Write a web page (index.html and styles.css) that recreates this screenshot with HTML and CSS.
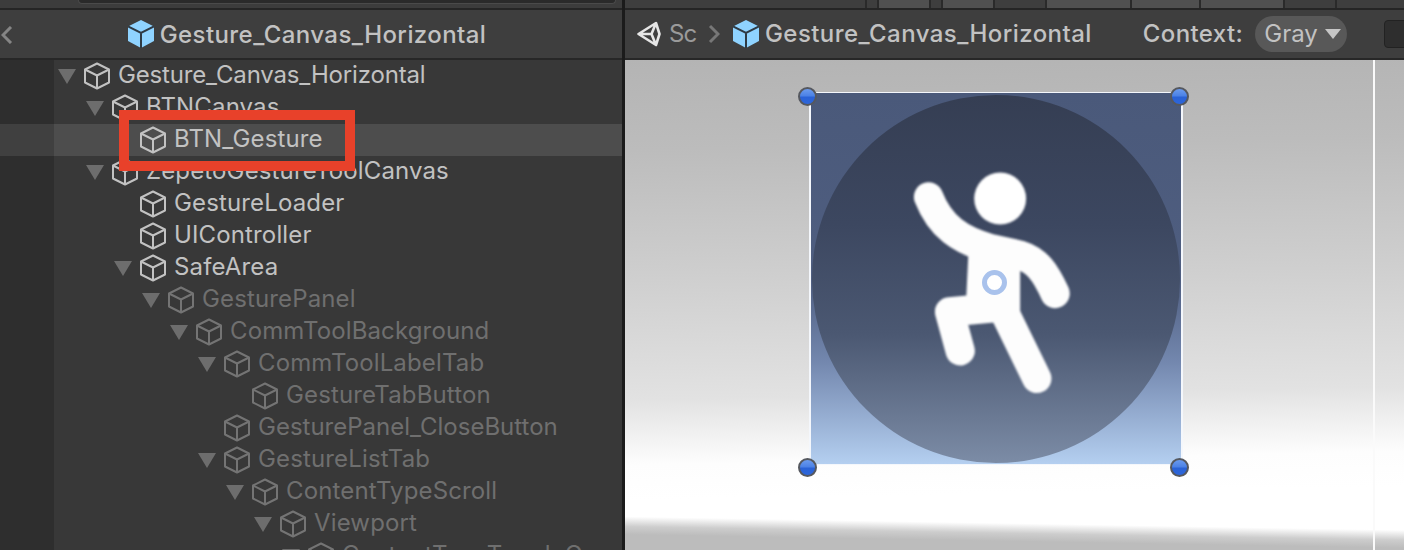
FILE: index.html
```html
<!DOCTYPE html>
<html lang="en">
<head>
    <meta charset="UTF-8">
    <title>Gesture_Canvas_Horizontal</title>
    <link rel="stylesheet" href="styles.css">
</head>
<body>
    <svg class="defs" width="0" height="0">
        <symbol id="cube" viewBox="0 0 26 28">
            <path d="M13 1.5 L25 7.5 V20.5 L13 26.5 L1 20.5 V7.5 Z M1 7.5 L13 13.5 L25 7.5 M13 13.5 V26.5" fill="none" stroke="currentColor" stroke-width="2" stroke-linejoin="round"/>
        </symbol>
        <symbol id="cube-blue" viewBox="0 0 26 28">
            <path d="M13 0 L26 6.5 V21 L13 28 L0 21 V6.5 Z" fill="#8fd3ff"/>
            <path d="M0 6.5 L13 13 L26 6.5 M13 13 V28" fill="none" stroke="#2e3a44" stroke-width="2"/>
        </symbol>
    </svg>

    <div class="window">
        <section class="hierarchy">
            <div class="strip strip-left"><div class="search"></div></div>
            <header class="head head-left">
                <svg class="back" viewBox="0 0 12 18"><path d="M10 1 L2 9 L10 17" fill="none" stroke="currentColor" stroke-width="3"/></svg>
                <svg class="cube"><use href="#cube-blue"/></svg>
                <span class="title">Gesture_Canvas_Horizontal</span>
            </header>
            <div class="tree">
                <div class="row depth-0 tight"><i class="arrow"></i><svg class="cube"><use href="#cube"/></svg><span>Gesture_Canvas_Horizontal</span></div>
                <div class="row depth-1"><i class="arrow"></i><svg class="cube"><use href="#cube"/></svg><span>BTNCanvas</span></div>
                <div class="row depth-2 selected"><i class="leaf"></i><svg class="cube"><use href="#cube"/></svg><span>BTN_Gesture</span></div>
                <div class="row depth-1"><i class="arrow"></i><svg class="cube"><use href="#cube"/></svg><span>ZepetoGestureToolCanvas</span></div>
                <div class="row depth-2"><i class="leaf"></i><svg class="cube"><use href="#cube"/></svg><span>GestureLoader</span></div>
                <div class="row depth-2"><i class="leaf"></i><svg class="cube"><use href="#cube"/></svg><span>UIController</span></div>
                <div class="row depth-2"><i class="arrow"></i><svg class="cube"><use href="#cube"/></svg><span>SafeArea</span></div>
                <div class="row depth-3 dim"><i class="arrow"></i><svg class="cube"><use href="#cube"/></svg><span>GesturePanel</span></div>
                <div class="row depth-4 dim"><i class="arrow"></i><svg class="cube"><use href="#cube"/></svg><span>CommToolBackground</span></div>
                <div class="row depth-5 dim"><i class="arrow"></i><svg class="cube"><use href="#cube"/></svg><span>CommToolLabelTab</span></div>
                <div class="row depth-6 dim"><i class="leaf"></i><svg class="cube"><use href="#cube"/></svg><span>GestureTabButton</span></div>
                <div class="row depth-5 dim tight-2"><i class="leaf"></i><svg class="cube"><use href="#cube"/></svg><span>GesturePanel_CloseButton</span></div>
                <div class="row depth-5 dim"><i class="arrow"></i><svg class="cube"><use href="#cube"/></svg><span>GestureListTab</span></div>
                <div class="row depth-6 dim"><i class="arrow"></i><svg class="cube"><use href="#cube"/></svg><span>ContentTypeScroll</span></div>
                <div class="row depth-7 dim"><i class="arrow"></i><svg class="cube"><use href="#cube"/></svg><span>Viewport</span></div>
                <div class="row depth-8 dim"><i class="arrow"></i><svg class="cube"><use href="#cube"/></svg><span>ContentTypeToggleGroup</span></div>
            </div>
            <div class="callout"></div>
        </section>

        <section class="scene">
            <div class="strip strip-right">
                <i class="tab w-240"></i><i class="tab w-10"></i><i class="tab light w-50"></i><i class="tab w-10"></i><i class="tab light w-50"></i>
                <i class="tab w-50"></i><i class="tab light w-83"></i><i class="tab light w-67"></i><i class="tab light w-82"></i><i class="tab w-50"></i><i class="tab w-fill"></i>
            </div>
            <header class="head head-right">
                <svg class="unity" viewBox="0 0 24 26">
                    <path d="M1.5 13 L19 2 L22.5 13 L19 24 Z M1.5 13 H14.5 M19 2 L14.5 13 L19 24" fill="none" stroke="#e6e6e6" stroke-width="2.6" stroke-linejoin="round"/>
                </svg>
                <span class="crumb">Sc</span>
                <svg class="sep" viewBox="0 0 12 20"><path d="M2 2 L10 10 L2 18" fill="none" stroke="currentColor" stroke-width="3"/></svg>
                <svg class="cube"><use href="#cube-blue"/></svg>
                <span class="title">Gesture_Canvas_Horizontal</span>
                <span class="context">Context:</span>
                <div class="pill">Gray<i class="pill-arrow"></i></div>
                <div class="dark-btn"></div>
            </header>
            <div class="preview">
                <i class="guide"></i>
                <div class="rect">
                    <div class="disc"></div>
                    <svg class="figure" viewBox="60 38 1115 1117">
                        <circle cx="630" cy="355" r="78" fill="#fff"/>
                        <g fill="none" stroke="#fdfdfd" stroke-width="88" stroke-linecap="round" stroke-linejoin="round">
                            <path d="M415 350 C450 440 510 480 600 505 L690 525 C740 540 765 575 795 640"/>
                            <path d="M640 690 L740 895"/>
                            <path d="M640 680 L478 695 L510 812"/>
                        </g>
                        <path d="M535 510 H690 V720 H525 Z" fill="#fdfdfd"/>
                    </svg>
                    <i class="pivot"></i>
                </div>
                <i class="handle h-tl"></i><i class="handle h-tr"></i><i class="handle h-bl"></i><i class="handle h-br"></i>
            </div>
        </section>
    </div>
</body>
</html>
```

FILE: styles.css
```css
html, body {
    margin: 0;
    height: 100%;
    overflow: hidden;
}
body {
    font-family: Inter, 'Liberation Sans', sans-serif;
    font-size: 24px;
    background: #1b1b1b;
    color: #c2c2c2;
}
.defs {
    position: absolute;
}
.window {
    display: grid;
    grid-template-columns: 622px 1fr;
    column-gap: 3px;
    height: 550px;
}
.hierarchy, .scene {
    position: relative;
    display: flex;
    flex-direction: column;
    overflow: hidden;
    min-width: 0;
}

/* top strip, only the last pixels of the toolbar above are visible */
.strip {
    height: 8px;
    flex: none;
    display: flex;
    border-bottom: 2px solid #252525;
    background: #3c3c3c;
}
.search {
    width: 536px;
    height: 3px;
    margin-left: 78px;
    background: #2a2a2a;
    border: 1px solid #4a4a4a;
    border-top: none;
    border-radius: 0 0 6px 6px;
}
.strip-right {
    gap: 2px;
    background: #2a2a2a;
}
.tab {
    flex: none;
    background: #3e3e3e;
}
.tab.light {
    background: #505050;
}
.w-10 { width: 10px; }
.w-50 { width: 50px; }
.w-67 { width: 67px; }
.w-82 { width: 82px; }
.w-83 { width: 83px; }
.w-240 { width: 240px; }
.w-fill { flex: 1; }

.head {
    height: 48px;
    flex: none;
    display: flex;
    align-items: center;
    background: #3e3e3e;
    border-bottom: 2px solid #272727;
}
.head > * {
    flex: none;
}
.head .cube {
    width: 26px;
    height: 28px;
}
.title {
    font-weight: 500;
    letter-spacing: 0.43px;
    white-space: nowrap;
}
.head-left {
    position: relative;
    justify-content: center;
    gap: 6px;
    padding-right: 8px;
}
.head-left .title {
    margin-top: 1px;
}
.back {
    position: absolute;
    left: 1px;
    top: 16px;
    width: 12px;
    height: 18px;
    color: #858585;
}
.head-right {
    padding-left: 12px;
}
.head-right span, .pill {
    margin-bottom: 1px;
}
.unity {
    width: 24px;
    height: 26px;
}
.crumb {
    margin-left: 8px;
    width: 26px;
    letter-spacing: -1px;
    color: #9a9a9a;
}
.sep {
    width: 12px;
    height: 20px;
    margin: 0 13px;
    color: #777;
}
.head-right .title {
    margin-left: 6px;
}
.context {
    margin-left: 51px;
    font-weight: 500;
    letter-spacing: 0.4px;
}
.pill {
    display: flex;
    align-items: center;
    width: 92px;
    height: 36px;
    margin-left: 12px;
    padding-left: 9px;
    box-sizing: border-box;
    border-radius: 18px;
    background: #585858;
}
.pill-arrow {
    width: 0;
    height: 0;
    margin-left: 7px;
    border-left: 8px solid transparent;
    border-right: 8px solid transparent;
    border-top: 10px solid #c6c6c6;
}
.dark-btn {
    width: 40px;
    height: 26px;
    margin-left: 37px;
    border: 1px solid #222;
    border-radius: 4px;
    background: #2e2e2e;
}

/* hierarchy tree */
.tree {
    flex: 1;
    overflow: hidden;
    background: linear-gradient(90deg, #2e2e2e 54px, #383838 54px);
}
.row {
    display: flex;
    align-items: center;
    height: 32px;
    letter-spacing: 0.14px;
    white-space: nowrap;
}
.row span {
    margin-left: 8px;
    margin-top: -4px;
}
.row .cube {
    width: 26px;
    height: 28px;
    flex: none;
    margin-left: 8px;
    color: #c2c2c2;
}
.row.tight {
    letter-spacing: -0.16px;
}
.row.tight-2 {
    letter-spacing: 0;
}
.row.dim {
    color: #6f6f6f;
}
.row.dim .cube {
    color: #747474;
}
.row.selected {
    background: linear-gradient(90deg, #404040 54px, #4d4d4d 54px);
}
.arrow, .leaf {
    width: 18px;
    flex: none;
}
.arrow {
    height: 0;
    border-left: 9px solid transparent;
    border-right: 9px solid transparent;
    border-top: 15px solid #6d6d6d;
    box-sizing: border-box;
}
.depth-0 { padding-left: 58px; }
.depth-1 { padding-left: 86px; }
.depth-2 { padding-left: 114px; }
.depth-3 { padding-left: 142px; }
.depth-4 { padding-left: 170px; }
.depth-5 { padding-left: 198px; }
.depth-6 { padding-left: 226px; }
.depth-7 { padding-left: 254px; }
.depth-8 { padding-left: 282px; }

.callout {
    position: absolute;
    left: 119px;
    top: 110px;
    width: 236px;
    height: 61px;
    box-sizing: border-box;
    border: 10px solid #e8412a;
}

/* scene preview */
.preview {
    position: relative;
    flex: 1;
    overflow: hidden;
    background:
        linear-gradient(181deg, transparent 470px, #cdcdcd 480px, #bcbcbc 488px),
        linear-gradient(179deg, #b4b4b4 0, #bcbcbc 90px, #cfcfcf 220px, #e2e2e2 340px, #fdfdfd 405px, #fff 440px);
}
.guide {
    position: absolute;
    left: 748px;
    top: 0;
    bottom: 0;
    width: 2px;
    background: #fafafa;
}
.rect {
    position: absolute;
    left: 184px;
    top: 32px;
    width: 374px;
    height: 373px;
    box-sizing: border-box;
    border: solid #f4f7fc;
    border-width: 1px 2px;
    background: linear-gradient(180deg, #4a597a 0, #4f5e80 50%, #7286ad 72%, #b4cff0 100%);
    overflow: hidden;
}
.disc {
    position: absolute;
    left: 1px;
    top: 2px;
    width: 368px;
    height: 368px;
    border-radius: 50%;
    background: linear-gradient(180deg, #353e53 0, #3c4760 35%, #4b5872 65%, #7c8ca6 100%);
}
.figure {
    position: absolute;
    left: -1px;
    top: 0;
    width: 372px;
    height: 372px;
    filter: blur(1.1px);
}
.pivot {
    position: absolute;
    left: 171px;
    top: 177px;
    width: 15px;
    height: 15px;
    border: 5px solid #a9c2ec;
    border-radius: 50%;
    background: #fff;
}
.handle {
    position: absolute;
    width: 15px;
    height: 15px;
    border: 2px solid #55585f;
    border-radius: 50%;
    background: linear-gradient(180deg, #6b9bee 0, #4c82e6 45%, #2a62d6 55%, #2d66da 100%);
}
.h-tl { left: 173px; top: 27px; }
.h-tr { left: 545px; top: 27px; }
.h-bl { left: 173px; top: 398px; }
.h-br { left: 545px; top: 398px; }
```
